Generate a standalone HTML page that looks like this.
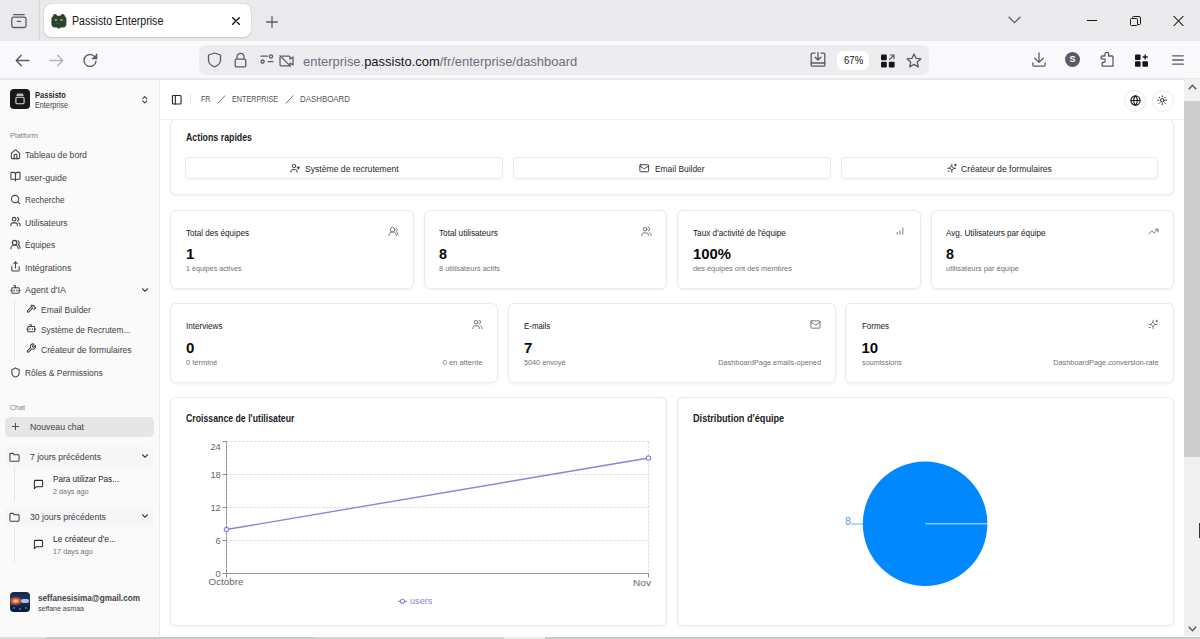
<!DOCTYPE html>
<html><head><meta charset="utf-8"><title>Passisto Enterprise</title>
<style>
*{box-sizing:border-box;margin:0;padding:0}
html,body{width:1200px;height:639px;overflow:hidden;background:#fff;font-family:"Liberation Sans",sans-serif}
.a{position:absolute;display:block}
.t{position:absolute;white-space:nowrap}
</style></head><body>

<div class="a" style="left:0px;top:0px;width:1200px;height:41px;background:#eaeaed"></div>
<div class="a" style="left:39px;top:0px;width:1px;height:40px;background:#d6d6db"></div>
<svg class="a" style="left:11px;top:13px" width="16" height="16" viewBox="0 0 16 16" fill="none" stroke="#5b5b66" stroke-width="1.3" stroke-linecap="round"><rect x="0.8" y="4.2" width="14.2" height="10.3" rx="1.8"/><path d="M2.6 1.6h10.6"/><path d="M6.3 8.4h3.2"/></svg>
<div class="a" style="left:44px;top:4px;width:207px;height:33px;background:#fff;border-radius:7px;box-shadow:0 0 1px rgba(0,0,0,.25),0 1px 2px rgba(0,0,0,.12)"></div>
<svg class="a" style="left:51px;top:12.5px" width="16" height="16" viewBox="0 0 16 16"><g fill="#284530"><ellipse cx="4" cy="2.6" rx="2" ry="1.7"/><ellipse cx="11.6" cy="2.6" rx="2" ry="1.7"/><rect x="0.4" y="2.8" width="15" height="11.6" rx="3.6"/><ellipse cx="7.8" cy="14.6" rx="1.6" ry="1"/></g><ellipse cx="4.9" cy="7" rx="1.3" ry="0.8" fill="#d8d49a"/><ellipse cx="10.5" cy="7" rx="1.3" ry="0.8" fill="#d8d49a"/><path d="M5.5 10.4h2" stroke="#6d7a4a" stroke-width="0.7"/></svg>
<div class="t" style="left:71.7px;top:15px;font-size:12px;line-height:12px;color:#15141a;transform:scaleX(0.8831);transform-origin:0 0;">Passisto Enterprise</div>
<svg class="a" style="left:232px;top:16.5px" width="8" height="8" viewBox="0 0 8 8" stroke="#15141a" stroke-width="1.4" stroke-linecap="round"><path d="M0.7 0.7 7.3 7.3M7.3 0.7 0.7 7.3"/></svg>
<svg class="a" style="left:265.5px;top:16px" width="12" height="12" viewBox="0 0 12 12" stroke="#5b5b66" stroke-width="1.3" stroke-linecap="round"><path d="M6 0.7v10.6M0.7 6h10.6"/></svg>
<svg class="a" style="left:1008px;top:16px" width="13" height="8" viewBox="0 0 13 8" fill="none" stroke="#5b5b66" stroke-width="1.2" stroke-linecap="round"><path d="M1 1.2 6.5 6.6 12 1.2"/></svg>
<div class="a" style="left:1087px;top:20px;width:10px;height:1px;background:#1a1a1a"></div>
<svg class="a" style="left:1130px;top:16px" width="11" height="10" viewBox="0 0 11 10" fill="none" stroke="#1a1a1a" stroke-width="1"><rect x="0.5" y="2.5" width="7" height="7" rx="1"/><path d="M2.5 2.5V1.5a1 1 0 0 1 1-1h5.5a1.5 1.5 0 0 1 1.5 1.5V7.5a1 1 0 0 1-1 1H7.5"/></svg>
<svg class="a" style="left:1173px;top:16px" width="11" height="10" viewBox="0 0 11 10" stroke="#1a1a1a" stroke-width="1.05"><path d="M0.5 0 10.5 10M10.5 0 0.5 10"/></svg>
<div class="a" style="left:0px;top:41px;width:1200px;height:37px;background:#f9f9fb"></div>
<div class="a" style="left:0px;top:78px;width:1200px;height:2px;background:#e9e9ec"></div>
<svg class="a" style="left:15px;top:54px" width="15" height="13" viewBox="0 0 15 13" fill="none" stroke="#5b5b66" stroke-width="1.4" stroke-linecap="round" stroke-linejoin="round"><path d="M14 6.5H1.6M6.3 1.2 1.2 6.5 6.3 11.8"/></svg>
<svg class="a" style="left:49px;top:54px" width="15" height="13" viewBox="0 0 15 13" fill="none" stroke="#b4b4ba" stroke-width="1.4" stroke-linecap="round" stroke-linejoin="round"><path d="M1 6.5H13.4M8.7 1.2 13.8 6.5 8.7 11.8"/></svg>
<svg class="a" style="left:82.5px;top:53px" width="15" height="14" viewBox="0 0 15 14" fill="none" stroke="#5b5b66" stroke-width="1.4" stroke-linecap="round"><path d="M12.6 5.2A6 6 0 1 0 13 8.3"/><path d="M13.6 1.2v4.3H9.3" fill="#5b5b66"/></svg>
<div class="a" style="left:199px;top:45px;width:730px;height:30px;background:#ededf0;border-radius:7px"></div>
<svg class="a" style="left:206.5px;top:51.5px" width="15" height="16" viewBox="0 0 15 16" fill="none" stroke="#5b5b66" stroke-width="1.3" stroke-linejoin="round"><path d="M7.5 1 L13.5 3 V8 Q13.5 12.5 7.5 15 Q1.5 12.5 1.5 8 V3 Z"/></svg>
<svg class="a" style="left:234px;top:51.5px" width="13" height="16" viewBox="0 0 13 16" fill="none" stroke="#5b5b66" stroke-width="1.3"><path d="M3 7V4.8a3.5 3.5 0 0 1 7 0V7"/><rect x="1.2" y="7.2" width="10.6" height="7.6" rx="1.2"/></svg>
<svg class="a" style="left:259.5px;top:54px" width="14" height="10" viewBox="0 0 14 10" fill="none" stroke="#5b5b66" stroke-width="1.3" stroke-linecap="round"><path d="M1 2.2h6.5M8 7.6h5"/><circle cx="11" cy="2.4" r="1.6"/><circle cx="2.6" cy="7.6" r="1.6"/></svg>
<svg class="a" style="left:279px;top:54.5px" width="15" height="12" viewBox="0 0 15 12" fill="none" stroke="#5b5b66" stroke-width="1.3" stroke-linejoin="round" stroke-linecap="round"><path d="M3 1.2H10a1 1 0 0 1 1 1V4l3-2v8l-3-2v1.8a1 1 0 0 1-1 1H2a1 1 0 0 1-1-1V2.2"/><path d="M1 0.6 11.5 11.4"/></svg>
<div class="t" style="left:302.5px;top:55px;font-size:13.3px;line-height:13.3px;color:#6e6e78;transform:scaleX(0.9735);transform-origin:0 0">enterprise.<span style="color:#15141a">passisto.com</span>/fr/enterprise/dashboard</div>
<svg class="a" style="left:810px;top:52px" width="16" height="15" viewBox="0 0 16 15" fill="none" stroke="#5b5b66" stroke-width="1.3" stroke-linecap="round" stroke-linejoin="round"><path d="M5 1.2H2.2a1 1 0 0 0-1 1v11a1 1 0 0 0 1 1h11.6a1 1 0 0 0 1-1v-11a1 1 0 0 0-1-1H11"/><path d="M1.2 11h13.6"/><path d="M8 0.5v7M5.2 5.2 8 8 10.8 5.2"/></svg>
<div class="a" style="left:837px;top:50.5px;width:32px;height:19.5px;background:#fff;border-radius:6px"></div>
<div class="t" style="left:843.8px;top:56px;font-size:10px;line-height:10px;color:#15141a;transform:scaleX(0.9593);transform-origin:0 0;">67%</div>
<svg class="a" style="left:881px;top:53.5px" width="14" height="14" viewBox="0 0 14 14"><rect x="0" y="0.5" width="5.8" height="5.8" rx="1" fill="#15141a"/><rect x="0" y="7.8" width="5.8" height="5.8" rx="1" fill="#15141a"/><rect x="7.8" y="7.8" width="5.8" height="5.8" rx="1" fill="#15141a"/><path d="M8.5 5.5 13 1M9.2 1H13V4.8" stroke="#5b5b66" stroke-width="1.2" fill="none" stroke-linecap="round"/></svg>
<svg class="a" style="left:906px;top:52.5px" width="16" height="15" viewBox="0 0 16 15" fill="none" stroke="#5b5b66" stroke-width="1.3" stroke-linejoin="round"><path d="M8 1 L10.1 5.4 L14.9 5.9 L11.3 9.1 L12.3 13.9 L8 11.4 L3.7 13.9 L4.7 9.1 L1.1 5.9 L5.9 5.4 Z"/></svg>
<svg class="a" style="left:1031.5px;top:52px" width="14" height="15" viewBox="0 0 14 15" fill="none" stroke="#5b5b66" stroke-width="1.3" stroke-linecap="round" stroke-linejoin="round"><path d="M7 0.8v9.5M2.8 6.2 7 10.4 11.2 6.2"/><path d="M0.8 10.8v1.8a1.6 1.6 0 0 0 1.6 1.6h9.2a1.6 1.6 0 0 0 1.6-1.6v-1.8"/></svg>
<div class="a" style="left:1065px;top:52.2px;width:15px;height:15px;border-radius:50%;background:#5b5b66"></div>
<div class="t" style="left:1065px;top:55.38px;width:15px;text-align:center;font-size:9px;line-height:9px;font-weight:bold;color:#fff">S</div>
<svg class="a" style="left:1099.5px;top:52px" width="14" height="15" viewBox="0 0 14 15" fill="none" stroke="#5b5b66" stroke-width="1.3" stroke-linejoin="round"><path d="M5 2.2a1.8 1.8 0 0 1 3.6 0V4h3.6a.8.8 0 0 1 .8.8V14.2H2.2V10.5H3.5a1.8 1.8 0 0 0 0-3.6H1.2V4.8a.8.8 0 0 1 .8-.8H5Z"/></svg>
<svg class="a" style="left:1135px;top:53.5px" width="14" height="13" viewBox="0 0 14 13"><rect x="0" y="0.5" width="5.6" height="5.6" rx="1" fill="#15141a"/><rect x="0" y="7.2" width="5.6" height="5.6" rx="1" fill="#15141a"/><rect x="7.4" y="7.2" width="5.6" height="5.6" rx="1" fill="#15141a"/><path d="M10.2 0.5v5M7.7 3h5" stroke="#15141a" stroke-width="1.4"/></svg>
<svg class="a" style="left:1171.5px;top:55px" width="12" height="10" viewBox="0 0 12 10" stroke="#5b5b66" stroke-width="1.3" stroke-linecap="round"><path d="M0.7 0.8h10.6M0.7 5h10.6M0.7 9.2h10.6"/></svg>
<div class="a" style="left:0px;top:80px;width:160px;height:560px;background:#fafafa;border-right:1px solid #ebebeb"></div>
<div class="a" style="left:10px;top:89px;width:20px;height:20px;background:#18181b;border-radius:4px"></div>
<svg class="a" style="left:10px;top:89px" width="20" height="20" viewBox="0 0 20 20"><path d="M7.3 4.6h5.4l1.2 2.4H6.1z" fill="#b8b8b8"/><rect x="5.9" y="8.2" width="8.2" height="6.6" rx="1.4" fill="none" stroke="#dcdcdc" stroke-width="1.1"/></svg>
<div class="t" style="left:35px;top:91px;font-size:9.2px;line-height:9.2px;color:#27272a;font-weight:bold;transform:scaleX(0.8192);transform-origin:0 0;">Passisto</div>
<div class="t" style="left:35px;top:101px;font-size:9px;line-height:9px;color:#3f3f46;transform:scaleX(0.8045);transform-origin:0 0;">Enterprise</div>
<svg class="a" style="left:140px;top:94.5px;" width="9.5" height="9.5" viewBox="0 0 24 24" fill="none" stroke="#3f3f46" stroke-width="2.8" stroke-linecap="round" stroke-linejoin="round"><path d="m7 15 5 5 5-5"/><path d="m7 9 5-5 5 5"/></svg>
<div class="t" style="left:10px;top:132px;font-size:8.04px;line-height:8.04px;color:#7f7f86;transform:scaleX(0.9354);transform-origin:0 0;">Platform</div>
<svg class="a" style="left:9.5px;top:148.6px;" width="11" height="11" viewBox="0 0 24 24" fill="none" stroke="#3f3f46" stroke-width="2.3" stroke-linecap="round" stroke-linejoin="round"><path d="M15 21v-8a1 1 0 0 0-1-1h-4a1 1 0 0 0-1 1v8"/><path d="M3 10a2 2 0 0 1 .709-1.528l7-5.999a2 2 0 0 1 2.582 0l7 5.999A2 2 0 0 1 21 10v9a2 2 0 0 1-2 2H5a2 2 0 0 1-2-2z"/></svg>
<div class="t" style="left:25px;top:150px;font-size:9.6px;line-height:9.6px;color:#3f3f46;transform:scaleX(0.8990);transform-origin:0 0;">Tableau de bord</div>
<svg class="a" style="left:9.5px;top:171.2px;" width="11" height="11" viewBox="0 0 24 24" fill="none" stroke="#3f3f46" stroke-width="2.3" stroke-linecap="round" stroke-linejoin="round"><path d="M12 7v14"/><path d="M3 18a1 1 0 0 1-1-1V4a1 1 0 0 1 1-1h5a4 4 0 0 1 4 4 4 4 0 0 1 4-4h5a1 1 0 0 1 1 1v13a1 1 0 0 1-1 1h-6a3 3 0 0 0-3 3 3 3 0 0 0-3-3z"/></svg>
<div class="t" style="left:25px;top:173px;font-size:9.6px;line-height:9.6px;color:#3f3f46;transform:scaleX(0.9237);transform-origin:0 0;">user-guide</div>
<svg class="a" style="left:9.5px;top:193.6px;" width="11" height="11" viewBox="0 0 24 24" fill="none" stroke="#3f3f46" stroke-width="2.3" stroke-linecap="round" stroke-linejoin="round"><circle cx="11" cy="11" r="8"/><path d="m21 21-4.3-4.3"/></svg>
<div class="t" style="left:25px;top:195px;font-size:9.6px;line-height:9.6px;color:#3f3f46;transform:scaleX(0.8551);transform-origin:0 0;">Recherche</div>
<svg class="a" style="left:9.5px;top:216.2px;" width="11" height="11" viewBox="0 0 24 24" fill="none" stroke="#3f3f46" stroke-width="2.3" stroke-linecap="round" stroke-linejoin="round"><path d="M16 21v-2a4 4 0 0 0-4-4H6a4 4 0 0 0-4 4v2"/><circle cx="9" cy="7" r="4"/><path d="M22 21v-2a4 4 0 0 0-3-3.87"/><path d="M16 3.13a4 4 0 0 1 0 7.75"/></svg>
<div class="t" style="left:25px;top:218px;font-size:9.6px;line-height:9.6px;color:#3f3f46;transform:scaleX(0.8993);transform-origin:0 0;">Utilisateurs</div>
<svg class="a" style="left:9.5px;top:238.6px;" width="11" height="11" viewBox="0 0 24 24" fill="none" stroke="#3f3f46" stroke-width="2.3" stroke-linecap="round" stroke-linejoin="round"><path d="M18 21a8 8 0 0 0-16 0"/><circle cx="10" cy="8" r="5"/><path d="M22 20c0-3.37-2-6.5-4-8a5 5 0 0 0-.45-8.3"/></svg>
<div class="t" style="left:25px;top:240px;font-size:9.6px;line-height:9.6px;color:#3f3f46;transform:scaleX(0.8676);transform-origin:0 0;">Équipes</div>
<svg class="a" style="left:9.5px;top:261.20000000000005px;" width="11" height="11" viewBox="0 0 24 24" fill="none" stroke="#3f3f46" stroke-width="2.3" stroke-linecap="round" stroke-linejoin="round"><path d="M4 12v8a2 2 0 0 0 2 2h12a2 2 0 0 0 2-2v-8"/><polyline points="16 6 12 2 8 6"/><line x1="12" x2="12" y1="2" y2="15"/></svg>
<div class="t" style="left:25px;top:263px;font-size:9.6px;line-height:9.6px;color:#3f3f46;transform:scaleX(0.9249);transform-origin:0 0;">Intégrations</div>
<svg class="a" style="left:9.5px;top:283.90000000000003px;" width="11" height="11" viewBox="0 0 24 24" fill="none" stroke="#3f3f46" stroke-width="2.3" stroke-linecap="round" stroke-linejoin="round"><path d="M12 8V4H8"/><rect width="16" height="12" x="4" y="8" rx="2"/><path d="M2 14h2"/><path d="M20 14h2"/><path d="M15 13v2"/><path d="M9 13v2"/></svg>
<div class="t" style="left:25px;top:285px;font-size:9.6px;line-height:9.6px;color:#3f3f46;transform:scaleX(0.9296);transform-origin:0 0;">Agent d&#x27;IA</div>
<svg class="a" style="left:139.5px;top:284.5px;" width="10" height="10" viewBox="0 0 24 24" fill="none" stroke="#3f3f46" stroke-width="2.6" stroke-linecap="round" stroke-linejoin="round"><path d="m6 9 6 6 6-6"/></svg>
<div class="a" style="left:14px;top:300px;width:1px;height:59px;background:#e5e5e5"></div>
<svg class="a" style="left:25.5px;top:303.4px;" width="10.5" height="10.5" viewBox="0 0 24 24" fill="none" stroke="#3f3f46" stroke-width="2.3" stroke-linecap="round" stroke-linejoin="round"><path d="m15 12-8.373 8.373a1 1 0 1 1-3-3L12 9"/><path d="m18 15 4-4"/><path d="m21.5 11.5-1.914-1.914A2 2 0 0 1 19 8.172V7l-2.26-1.13a6 6 0 0 0-2.476-.62H11.5l.92.82A6.18 6.18 0 0 1 14 10.5V12"/></svg>
<div class="t" style="left:40.9px;top:305px;font-size:9.6px;line-height:9.6px;color:#3f3f46;transform:scaleX(0.8823);transform-origin:0 0;">Email Builder</div>
<svg class="a" style="left:25.5px;top:323.4px;" width="10.5" height="10.5" viewBox="0 0 24 24" fill="none" stroke="#3f3f46" stroke-width="2.3" stroke-linecap="round" stroke-linejoin="round"><path d="M12 8V4H8"/><rect width="16" height="12" x="4" y="8" rx="2"/><path d="M2 14h2"/><path d="M20 14h2"/><path d="M15 13v2"/><path d="M9 13v2"/></svg>
<div class="t" style="left:40.9px;top:325px;font-size:9.6px;line-height:9.6px;color:#3f3f46;transform:scaleX(0.8682);transform-origin:0 0;">Système de Recrutem...</div>
<svg class="a" style="left:25.5px;top:343.0px;" width="10.5" height="10.5" viewBox="0 0 24 24" fill="none" stroke="#3f3f46" stroke-width="2.3" stroke-linecap="round" stroke-linejoin="round"><path d="M14.7 6.3a1 1 0 0 0 0 1.4l1.6 1.6a1 1 0 0 0 1.4 0l3.77-3.77a6 6 0 0 1-7.94 7.94l-6.91 6.91a2.12 2.12 0 0 1-3-3l6.91-6.91a6 6 0 0 1 7.94-7.94l-3.76 3.76z"/></svg>
<div class="t" style="left:40.9px;top:345px;font-size:9.6px;line-height:9.6px;color:#3f3f46;transform:scaleX(0.8994);transform-origin:0 0;">Créateur de formulaires</div>
<svg class="a" style="left:9.5px;top:366.5px;" width="11" height="11" viewBox="0 0 24 24" fill="none" stroke="#3f3f46" stroke-width="2.3" stroke-linecap="round" stroke-linejoin="round"><path d="M20 13c0 5-3.5 7.5-7.66 8.95a1 1 0 0 1-.67-.01C7.5 20.5 4 18 4 13V6a1 1 0 0 1 1-1c2 0 4.5-1.2 6.24-2.72a1.17 1.17 0 0 1 1.52 0C14.51 3.81 17 5 19 5a1 1 0 0 1 1 1z"/></svg>
<div class="t" style="left:25px;top:368px;font-size:9.6px;line-height:9.6px;color:#3f3f46;transform:scaleX(0.8773);transform-origin:0 0;">Rôles &amp; Permissions</div>
<div class="t" style="left:10px;top:404px;font-size:8.04px;line-height:8.04px;color:#7f7f86;transform:scaleX(0.8832);transform-origin:0 0;">Chat</div>
<div class="a" style="left:5px;top:417px;width:149px;height:20px;background:#e6e6e6;border-radius:5px"></div>
<svg class="a" style="left:9.5px;top:421px;" width="11" height="11" viewBox="0 0 24 24" fill="none" stroke="#3f3f46" stroke-width="2" stroke-linecap="round" stroke-linejoin="round"><path d="M5 12h14"/><path d="M12 5v14"/></svg>
<div class="t" style="left:30px;top:422px;font-size:9.6px;line-height:9.6px;color:#3f3f46;transform:scaleX(0.9115);transform-origin:0 0;">Nouveau chat</div>
<div class="a" style="left:5px;top:447px;width:149px;height:19.5px;background:#f6f6f6;border-radius:5px"></div>
<svg class="a" style="left:9px;top:451.5px;" width="11" height="11" viewBox="0 0 24 24" fill="none" stroke="#3f3f46" stroke-width="2.3" stroke-linecap="round" stroke-linejoin="round"><path d="M20 20a2 2 0 0 0 2-2V8a2 2 0 0 0-2-2h-7.9a2 2 0 0 1-1.69-.9L9.6 3.9A2 2 0 0 0 7.93 3H4a2 2 0 0 0-2 2v13a2 2 0 0 0 2 2Z"/></svg>
<div class="t" style="left:30px;top:452px;font-size:9.6px;line-height:9.6px;color:#3f3f46;transform:scaleX(0.8989);transform-origin:0 0;">7 jours précédents</div>
<svg class="a" style="left:139.5px;top:450.5px;" width="10" height="10" viewBox="0 0 24 24" fill="none" stroke="#3f3f46" stroke-width="2.6" stroke-linecap="round" stroke-linejoin="round"><path d="m6 9 6 6 6-6"/></svg>
<div class="a" style="left:5px;top:507.2px;width:149px;height:19.5px;background:#f6f6f6;border-radius:5px"></div>
<svg class="a" style="left:9px;top:511.7px;" width="11" height="11" viewBox="0 0 24 24" fill="none" stroke="#3f3f46" stroke-width="2.3" stroke-linecap="round" stroke-linejoin="round"><path d="M20 20a2 2 0 0 0 2-2V8a2 2 0 0 0-2-2h-7.9a2 2 0 0 1-1.69-.9L9.6 3.9A2 2 0 0 0 7.93 3H4a2 2 0 0 0-2 2v13a2 2 0 0 0 2 2Z"/></svg>
<div class="t" style="left:30px;top:512px;font-size:9.6px;line-height:9.6px;color:#3f3f46;transform:scaleX(0.9013);transform-origin:0 0;">30 jours précédents</div>
<svg class="a" style="left:139.5px;top:510.7px;" width="10" height="10" viewBox="0 0 24 24" fill="none" stroke="#3f3f46" stroke-width="2.6" stroke-linecap="round" stroke-linejoin="round"><path d="m6 9 6 6 6-6"/></svg>
<div class="a" style="left:14px;top:467px;width:1px;height:34.5px;background:#e5e5e5"></div>
<div class="a" style="left:14px;top:527px;width:1px;height:34.5px;background:#e5e5e5"></div>
<svg class="a" style="left:32.5px;top:478.5px;" width="11" height="11" viewBox="0 0 24 24" fill="none" stroke="#27272a" stroke-width="2.2" stroke-linecap="round" stroke-linejoin="round"><path d="M21 15a2 2 0 0 1-2 2H7l-4 4V5a2 2 0 0 1 2-2h14a2 2 0 0 1 2 2z"/></svg>
<div class="t" style="left:53.4px;top:474px;font-size:9.6px;line-height:9.6px;color:#27272a;transform:scaleX(0.8473);transform-origin:0 0;">Para utilizar Pas...</div>
<div class="t" style="left:53.4px;top:488px;font-size:8.04px;line-height:8.04px;color:#71717a;transform:scaleX(0.9050);transform-origin:0 0;">2 days ago</div>
<svg class="a" style="left:32.5px;top:538.5px;" width="11" height="11" viewBox="0 0 24 24" fill="none" stroke="#27272a" stroke-width="2.2" stroke-linecap="round" stroke-linejoin="round"><path d="M21 15a2 2 0 0 1-2 2H7l-4 4V5a2 2 0 0 1 2-2h14a2 2 0 0 1 2 2z"/></svg>
<div class="t" style="left:53.4px;top:534px;font-size:9.6px;line-height:9.6px;color:#27272a;transform:scaleX(0.8781);transform-origin:0 0;">Le créateur d&#x27;e...</div>
<div class="t" style="left:53.4px;top:548px;font-size:8.04px;line-height:8.04px;color:#71717a;transform:scaleX(0.9085);transform-origin:0 0;">17 days ago</div>
<div class="a" style="left:10px;top:592px;width:20px;height:20px;border-radius:4px;overflow:hidden;background:linear-gradient(180deg,#14284a 0%,#1d3a66 45%,#0f2244 75%,#0a1830 100%)"><div style="position:absolute;left:-2px;top:4px;width:14px;height:10px;border-radius:50%;background:radial-gradient(ellipse at 55% 50%,#fff2d0 0,#ff9a5a 18%,#c4503a 38%,rgba(120,60,90,.0) 70%)"></div><div style="position:absolute;left:11px;top:7px;width:8px;height:4px;border-radius:2px;background:rgba(230,240,255,.75)"></div><div style="position:absolute;left:3px;top:15px;width:2px;height:2px;border-radius:50%;background:#3a7bd5"></div><div style="position:absolute;left:9px;top:16px;width:2px;height:2px;border-radius:50%;background:#3a7bd5"></div><div style="position:absolute;left:15px;top:15px;width:2px;height:2px;border-radius:50%;background:#3a7bd5"></div></div>
<div class="t" style="left:38px;top:594px;font-size:9px;line-height:9px;color:#3f3f46;font-weight:bold;transform:scaleX(0.9041);transform-origin:0 0;">seffanesisima@gmail.com</div>
<div class="t" style="left:38px;top:605px;font-size:8.04px;line-height:8.04px;color:#3f3f46;transform:scaleX(0.8746);transform-origin:0 0;">seffane asmaa</div>
<div class="a" style="left:160px;top:80px;width:1024px;height:556px;background:#fff"></div>
<div class="a" style="left:170px;top:119px;width:1004px;height:76px;background:#fff;border:1px solid #ebebeb;border-radius:6px;box-shadow:0 1px 3px rgba(0,0,0,.06)"></div>
<div class="a" style="left:160px;top:80px;width:1024px;height:40px;background:#fff;border-bottom:1px solid #f0f0f0"></div>
<svg class="a" style="left:170.5px;top:93.5px;" width="11.5" height="11.5" viewBox="0 0 24 24" fill="none" stroke="#27272a" stroke-width="2.3" stroke-linecap="round" stroke-linejoin="round"><rect width="18" height="18" x="3" y="3" rx="2"/><path d="M9 3v18"/></svg>
<div class="a" style="left:190px;top:94px;width:1px;height:9.5px;background:#e5e5e5"></div>
<div class="t" style="left:200.6px;top:95px;font-size:9px;line-height:9px;color:#52525b;transform:scaleX(0.7918);transform-origin:0 0;">FR</div>
<svg class="a" style="left:216.5px;top:94.5px" width="9" height="9" viewBox="0 0 9 9" stroke="#71717a" stroke-width="1"><path d="M8.2 0.5 0.8 8.5"/></svg>
<div class="t" style="left:231.8px;top:95px;font-size:9px;line-height:9px;color:#52525b;transform:scaleX(0.7998);transform-origin:0 0;">ENTERPRISE</div>
<svg class="a" style="left:284.5px;top:94.5px" width="9" height="9" viewBox="0 0 9 9" stroke="#71717a" stroke-width="1"><path d="M8.2 0.5 0.8 8.5"/></svg>
<div class="t" style="left:299.8px;top:95px;font-size:9px;line-height:9px;color:#52525b;transform:scaleX(0.8770);transform-origin:0 0;">DASHBOARD</div>
<div class="a" style="left:1124px;top:89.5px;width:22px;height:22px;background:#fff;border:1px solid #ececec;border-radius:50%"></div>
<svg class="a" style="left:1129.5px;top:94.8px;" width="11" height="11" viewBox="0 0 24 24" fill="none" stroke="#18181b" stroke-width="2.4" stroke-linecap="round" stroke-linejoin="round"><circle cx="12" cy="12" r="10"/><path d="M12 2a14.5 14.5 0 0 0 0 20 14.5 14.5 0 0 0 0-20"/><path d="M2 12h20"/></svg>
<div class="a" style="left:1151.5px;top:89.5px;width:22px;height:22px;background:#fff;border:1px solid #ececec;border-radius:50%"></div>
<svg class="a" style="left:1157px;top:95px;" width="10.5" height="10.5" viewBox="0 0 24 24" fill="none" stroke="#18181b" stroke-width="2.2" stroke-linecap="round" stroke-linejoin="round"><circle cx="12" cy="12" r="4"/><path d="M12 2v2"/><path d="M12 20v2"/><path d="m4.93 4.93 1.41 1.41"/><path d="m17.66 17.66 1.41 1.41"/><path d="M2 12h2"/><path d="M20 12h2"/><path d="m6.34 17.66-1.41 1.41"/><path d="m19.07 4.93-1.41 1.41"/></svg>
<div class="t" style="left:185.7px;top:133px;font-size:10px;line-height:10px;color:#1c1c1f;font-weight:bold;transform:scaleX(0.8798);transform-origin:0 0;">Actions rapides</div>
<div class="a" style="left:185px;top:157px;width:318px;height:22px;background:#fff;border:1px solid #ebebeb;border-radius:4px;box-shadow:0 1px 2px rgba(0,0,0,.04)"></div>
<svg class="a" style="left:290px;top:162.5px;" width="10.5" height="10.5" viewBox="0 0 24 24" fill="none" stroke="#27272a" stroke-width="2" stroke-linecap="round" stroke-linejoin="round"><path d="M16 21v-2a4 4 0 0 0-4-4H6a4 4 0 0 0-4 4v2"/><circle cx="9" cy="7" r="4"/><line x1="19" x2="19" y1="8" y2="14"/><line x1="22" x2="16" y1="11" y2="11"/></svg>
<div class="t" style="left:305px;top:164px;font-size:9.6px;line-height:9.6px;color:#27272a;transform:scaleX(0.8964);transform-origin:0 0;">Système de recrutement</div>
<div class="a" style="left:513px;top:157px;width:318px;height:22px;background:#fff;border:1px solid #ebebeb;border-radius:4px;box-shadow:0 1px 2px rgba(0,0,0,.04)"></div>
<svg class="a" style="left:639px;top:162.5px;" width="10.5" height="10.5" viewBox="0 0 24 24" fill="none" stroke="#27272a" stroke-width="2" stroke-linecap="round" stroke-linejoin="round"><rect width="20" height="16" x="2" y="4" rx="2"/><path d="m22 7-8.970 5.7a1.94 1.94 0 0 1-2.06 0L2 7"/></svg>
<div class="t" style="left:654.6px;top:164px;font-size:9.6px;line-height:9.6px;color:#27272a;transform:scaleX(0.8770);transform-origin:0 0;">Email Builder</div>
<div class="a" style="left:841px;top:157px;width:317px;height:22px;background:#fff;border:1px solid #ebebeb;border-radius:4px;box-shadow:0 1px 2px rgba(0,0,0,.04)"></div>
<svg class="a" style="left:946.8px;top:162.5px;" width="10.5" height="10.5" viewBox="0 0 24 24" fill="none" stroke="#27272a" stroke-width="2" stroke-linecap="round" stroke-linejoin="round"><path d="M11 3v4.5M11 16.5V21M2 12h4.5M15.5 12H20M11 7.5 15.5 12 11 16.5 6.5 12Z"/><path d="M19 2.5v4M17 4.5h4"/><path d="M2.5 18.5h2.5"/></svg>
<div class="t" style="left:961.25px;top:164px;font-size:9.6px;line-height:9.6px;color:#27272a;transform:scaleX(0.9024);transform-origin:0 0;">Créateur de formulaires</div>
<div class="a" style="left:170px;top:210px;width:244px;height:79px;background:#fff;border:1px solid #ebebeb;border-radius:6px;box-shadow:0 1px 3px rgba(0,0,0,.06)"></div>
<div class="t" style="left:186px;top:228px;font-size:9.6px;line-height:9.6px;color:#18181b;transform:scaleX(0.8431);transform-origin:0 0;">Total des équipes</div>
<div class="t" style="left:186px;top:246px;font-size:15px;line-height:15px;color:#0a0a0a;font-weight:bold;">1</div>
<div class="t" style="left:186px;top:265px;font-size:8.04px;line-height:8.04px;color:#71717a;transform:scaleX(0.8966);transform-origin:0 0;">1 équipes actives</div>
<svg class="a" style="left:387.5px;top:225.8px;" width="11" height="11" viewBox="0 0 24 24" fill="none" stroke="#666" stroke-width="1.9" stroke-linecap="round" stroke-linejoin="round"><path d="M18 21a8 8 0 0 0-16 0"/><circle cx="10" cy="8" r="5"/><path d="M22 20c0-3.37-2-6.5-4-8a5 5 0 0 0-.45-8.3"/></svg>
<div class="a" style="left:424px;top:210px;width:243px;height:79px;background:#fff;border:1px solid #ebebeb;border-radius:6px;box-shadow:0 1px 3px rgba(0,0,0,.06)"></div>
<div class="t" style="left:439px;top:228px;font-size:9.6px;line-height:9.6px;color:#18181b;transform:scaleX(0.8542);transform-origin:0 0;">Total utilisateurs</div>
<div class="t" style="left:439px;top:246px;font-size:15px;line-height:15px;color:#0a0a0a;font-weight:bold;transform:scaleX(0.9589);transform-origin:0 0;">8</div>
<div class="t" style="left:439px;top:265px;font-size:8.04px;line-height:8.04px;color:#71717a;transform:scaleX(0.9224);transform-origin:0 0;">8 utilisateurs actifs</div>
<svg class="a" style="left:640.5px;top:225.8px;" width="11" height="11" viewBox="0 0 24 24" fill="none" stroke="#666" stroke-width="1.9" stroke-linecap="round" stroke-linejoin="round"><path d="M16 21v-2a4 4 0 0 0-4-4H6a4 4 0 0 0-4 4v2"/><circle cx="9" cy="7" r="4"/><path d="M22 21v-2a4 4 0 0 0-3-3.87"/><path d="M16 3.13a4 4 0 0 1 0 7.75"/></svg>
<div class="a" style="left:677px;top:210px;width:244px;height:79px;background:#fff;border:1px solid #ebebeb;border-radius:6px;box-shadow:0 1px 3px rgba(0,0,0,.06)"></div>
<div class="t" style="left:693px;top:228px;font-size:9.6px;line-height:9.6px;color:#18181b;transform:scaleX(0.8547);transform-origin:0 0;">Taux d&#x27;activité de l&#x27;équipe</div>
<div class="t" style="left:693px;top:246px;font-size:15px;line-height:15px;color:#0a0a0a;font-weight:bold;transform:scaleX(0.9905);transform-origin:0 0;">100%</div>
<div class="t" style="left:693px;top:265px;font-size:8.04px;line-height:8.04px;color:#71717a;transform:scaleX(0.9191);transform-origin:0 0;">des équipes ont des membres</div>
<svg class="a" style="left:896px;top:227.3px" width="8" height="8" viewBox="0 0 8 8" stroke="#8a8a8a" stroke-width="1.1" stroke-linecap="round"><path d="M1.2 7.2v-1.6M4 7.2V3.8M6.8 7.2V1"/></svg>
<div class="a" style="left:931px;top:210px;width:243px;height:79px;background:#fff;border:1px solid #ebebeb;border-radius:6px;box-shadow:0 1px 3px rgba(0,0,0,.06)"></div>
<div class="t" style="left:946px;top:228px;font-size:9.6px;line-height:9.6px;color:#18181b;transform:scaleX(0.8497);transform-origin:0 0;">Avg. Utilisateurs par équipe</div>
<div class="t" style="left:946px;top:246px;font-size:15px;line-height:15px;color:#0a0a0a;font-weight:bold;transform:scaleX(0.9589);transform-origin:0 0;">8</div>
<div class="t" style="left:946px;top:265px;font-size:8.04px;line-height:8.04px;color:#71717a;transform:scaleX(0.9280);transform-origin:0 0;">utilisateurs par équipe</div>
<svg class="a" style="left:1147.5px;top:225.8px;" width="11" height="11" viewBox="0 0 24 24" fill="none" stroke="#666" stroke-width="1.9" stroke-linecap="round" stroke-linejoin="round"><polyline points="22 7 13.5 15.5 8.5 10.5 2 17"/><polyline points="16 7 22 7 22 13"/></svg>
<div class="a" style="left:170px;top:303px;width:328px;height:80px;background:#fff;border:1px solid #ebebeb;border-radius:6px;box-shadow:0 1px 3px rgba(0,0,0,.06)"></div>
<div class="t" style="left:186px;top:321px;font-size:9.6px;line-height:9.6px;color:#18181b;transform:scaleX(0.8446);transform-origin:0 0;">Interviews</div>
<div class="t" style="left:186px;top:340px;font-size:15px;line-height:15px;color:#0a0a0a;font-weight:bold;">0</div>
<div class="t" style="left:186px;top:359px;font-size:8.04px;line-height:8.04px;color:#71717a;transform:scaleX(0.9369);transform-origin:0 0;">0 terminé</div>
<div class="t" style="right:717.5px;top:359px;font-size:8.04px;line-height:8.04px;color:#71717a;transform:scaleX(0.9348);transform-origin:100% 0;">0 en attente</div>
<svg class="a" style="left:471.5px;top:319.4px;" width="11" height="11" viewBox="0 0 24 24" fill="none" stroke="#666" stroke-width="1.9" stroke-linecap="round" stroke-linejoin="round"><path d="M16 21v-2a4 4 0 0 0-4-4H6a4 4 0 0 0-4 4v2"/><circle cx="9" cy="7" r="4"/><path d="M22 21v-2a4 4 0 0 0-3-3.87"/><path d="M16 3.13a4 4 0 0 1 0 7.75"/></svg>
<div class="a" style="left:508px;top:303px;width:328px;height:80px;background:#fff;border:1px solid #ebebeb;border-radius:6px;box-shadow:0 1px 3px rgba(0,0,0,.06)"></div>
<div class="t" style="left:524px;top:321px;font-size:9.6px;line-height:9.6px;color:#18181b;transform:scaleX(0.8218);transform-origin:0 0;">E-mails</div>
<div class="t" style="left:524px;top:340px;font-size:15px;line-height:15px;color:#0a0a0a;font-weight:bold;">7</div>
<div class="t" style="left:524px;top:359px;font-size:8.04px;line-height:8.04px;color:#71717a;transform:scaleX(0.9034);transform-origin:0 0;">5040 envoyé</div>
<div class="t" style="right:379.5px;top:359px;font-size:8.04px;line-height:8.04px;color:#71717a;transform:scaleX(0.9090);transform-origin:100% 0;">DashboardPage.emails-opened</div>
<svg class="a" style="left:809.5px;top:319.4px;" width="11" height="11" viewBox="0 0 24 24" fill="none" stroke="#666" stroke-width="1.9" stroke-linecap="round" stroke-linejoin="round"><rect width="20" height="16" x="2" y="4" rx="2"/><path d="m22 7-8.970 5.7a1.94 1.94 0 0 1-2.06 0L2 7"/></svg>
<div class="a" style="left:845px;top:303px;width:329px;height:80px;background:#fff;border:1px solid #ebebeb;border-radius:6px;box-shadow:0 1px 3px rgba(0,0,0,.06)"></div>
<div class="t" style="left:861.5px;top:321px;font-size:9.6px;line-height:9.6px;color:#18181b;transform:scaleX(0.8298);transform-origin:0 0;">Formes</div>
<div class="t" style="left:861.5px;top:340px;font-size:15px;line-height:15px;color:#0a0a0a;font-weight:bold;">10</div>
<div class="t" style="left:861.5px;top:359px;font-size:8.04px;line-height:8.04px;color:#71717a;transform:scaleX(0.9042);transform-origin:0 0;">soumissions</div>
<div class="t" style="right:41.5px;top:359px;font-size:8.04px;line-height:8.04px;color:#71717a;transform:scaleX(0.9114);transform-origin:100% 0;">DashboardPage.conversion-rate</div>
<svg class="a" style="left:1147.5px;top:319.4px;" width="11" height="11" viewBox="0 0 24 24" fill="none" stroke="#666" stroke-width="1.9" stroke-linecap="round" stroke-linejoin="round"><path d="M11 3v4.5M11 16.5V21M2 12h4.5M15.5 12H20M11 7.5 15.5 12 11 16.5 6.5 12Z"/><path d="M19 2.5v4M17 4.5h4"/><path d="M2.5 18.5h2.5"/></svg>
<div class="a" style="left:170px;top:397px;width:497px;height:229px;background:#fff;border:1px solid #ebebeb;border-radius:6px;box-shadow:0 1px 3px rgba(0,0,0,.06)"></div>
<div class="a" style="left:677px;top:397px;width:497px;height:229px;background:#fff;border:1px solid #ebebeb;border-radius:6px;box-shadow:0 1px 3px rgba(0,0,0,.06)"></div>
<div class="t" style="left:185.8px;top:413px;font-size:10.5px;line-height:10.5px;color:#1c1c1f;font-weight:bold;transform:scaleX(0.8320);transform-origin:0 0;">Croissance de l&#x27;utilisateur</div>
<div class="t" style="left:693px;top:413px;font-size:10.5px;line-height:10.5px;color:#1c1c1f;font-weight:bold;transform:scaleX(0.8721);transform-origin:0 0;">Distribution d&#x27;équipe</div>
<svg class="a" style="left:0;top:0" width="1200" height="639" viewBox="0 0 1200 639"><line x1="226.5" y1="540.5" x2="648.5" y2="540.5" stroke="#d6d6d6" stroke-width="1" stroke-dasharray="2 2"/><line x1="226.5" y1="507.5" x2="648.5" y2="507.5" stroke="#d6d6d6" stroke-width="1" stroke-dasharray="2 2"/><line x1="226.5" y1="474.5" x2="648.5" y2="474.5" stroke="#d6d6d6" stroke-width="1" stroke-dasharray="2 2"/><line x1="226.5" y1="441.5" x2="648.5" y2="441.5" stroke="#d6d6d6" stroke-width="1" stroke-dasharray="2 2"/><line x1="648.5" y1="441.5" x2="648.5" y2="573.5" stroke="#d6d6d6" stroke-width="1" stroke-dasharray="2 2"/><line x1="226.5" y1="441.5" x2="226.5" y2="573.5" stroke="#b0b0b0" stroke-width="1"/><line x1="226.5" y1="441.5" x2="226.5" y2="573.5" stroke="#8a8a8a" stroke-width="1" stroke-dasharray="2 2"/><line x1="226.5" y1="573.5" x2="648.5" y2="573.5" stroke="#b0b0b0" stroke-width="1"/><line x1="226.5" y1="573.5" x2="648.5" y2="573.5" stroke="#8a8a8a" stroke-width="1" stroke-dasharray="2 2"/><line x1="222.5" y1="573.5" x2="226.5" y2="573.5" stroke="#8f8f8f" stroke-width="1"/><line x1="222.5" y1="540.5" x2="226.5" y2="540.5" stroke="#8f8f8f" stroke-width="1"/><line x1="222.5" y1="507.5" x2="226.5" y2="507.5" stroke="#8f8f8f" stroke-width="1"/><line x1="222.5" y1="474.5" x2="226.5" y2="474.5" stroke="#8f8f8f" stroke-width="1"/><line x1="222.5" y1="441.5" x2="226.5" y2="441.5" stroke="#8f8f8f" stroke-width="1"/><line x1="226.5" y1="573.5" x2="226.5" y2="577.5" stroke="#8f8f8f" stroke-width="1"/><line x1="648.5" y1="573.5" x2="648.5" y2="577.5" stroke="#8f8f8f" stroke-width="1"/><line x1="226.5" y1="529.5" x2="648.5" y2="458.0" stroke="#8884d8" stroke-width="1.35"/><circle cx="226.5" cy="529.5" r="2.2" fill="#fff" stroke="#8884d8" stroke-width="1.2"/><circle cx="648.5" cy="458.0" r="2.2" fill="#fff" stroke="#8884d8" stroke-width="1.2"/><line x1="398" y1="601.3" x2="407" y2="601.3" stroke="#8884d8" stroke-width="1.2"/><circle cx="402.5" cy="601.3" r="2" fill="#fff" stroke="#8884d8" stroke-width="1.1"/><circle cx="925.1" cy="523.8" r="62.3" fill="#0088fe"/><line x1="925.1" y1="523.8" x2="987.6" y2="523.8" stroke="#cfe6ff" stroke-width="1"/><line x1="851" y1="524" x2="863" y2="524" stroke="#63b0fe" stroke-width="1"/></svg>
<div class="t" style="right:979.2px;top:569px;font-size:9.4px;line-height:9.4px;color:#666;">0</div>
<div class="t" style="right:979.2px;top:536px;font-size:9.4px;line-height:9.4px;color:#666;">6</div>
<div class="t" style="right:979.2px;top:503px;font-size:9.4px;line-height:9.4px;color:#666;">12</div>
<div class="t" style="right:979.2px;top:470px;font-size:9.4px;line-height:9.4px;color:#666;">18</div>
<div class="t" style="right:979.2px;top:442px;font-size:9.4px;line-height:9.4px;color:#666;">24</div>
<div class="t" style="left:26.30000000000001px;width:400px;text-align:center;top:577px;font-size:9.4px;line-height:9.4px;color:#666;transform:scaleX(1.0467);transform-origin:50% 0;">Octobre</div>
<div class="t" style="left:442.20000000000005px;width:400px;text-align:center;top:578px;font-size:9.4px;line-height:9.4px;color:#666;transform:scaleX(1.0768);transform-origin:50% 0;">Nov</div>
<div class="t" style="left:409.5px;top:596px;font-size:9.4px;line-height:9.4px;color:#8884d8;transform:scaleX(0.9788);transform-origin:0 0;">users</div>
<div class="t" style="left:845.3px;top:517px;font-size:10px;line-height:10px;color:#3a9bfe;">8</div>
<div class="a" style="left:1184px;top:79px;width:16px;height:557px;background:#f0f0f0"></div>
<div class="a" style="left:1184px;top:101px;width:16px;height:356px;background:#cdcdcd"></div>
<svg class="a" style="left:1187.5px;top:84px" width="9" height="6" viewBox="0 0 9 6" fill="none" stroke="#606060" stroke-width="1.6"><path d="M0.8 5.2 4.5 1.3 8.2 5.2"/></svg>
<svg class="a" style="left:1187.5px;top:626px" width="9" height="6" viewBox="0 0 9 6" fill="none" stroke="#606060" stroke-width="1.6"><path d="M0.8 0.8 4.5 4.7 8.2 0.8"/></svg>
<div class="a" style="left:1198.5px;top:523px;width:1.5px;height:14.5px;background:#333"></div>
<div class="a" style="left:0px;top:636.5px;width:1200px;height:2.5px;background:#c9c9c9"></div>
<div class="a" style="left:0px;top:636.5px;width:45px;height:2.5px;background:#dcdcdc"></div>
<div class="a" style="left:315px;top:636.5px;width:189px;height:2.5px;background:#d4d4d4"></div>
<div class="a" style="left:504px;top:636.5px;width:41px;height:2.5px;background:#ececec"></div>
</body></html>
